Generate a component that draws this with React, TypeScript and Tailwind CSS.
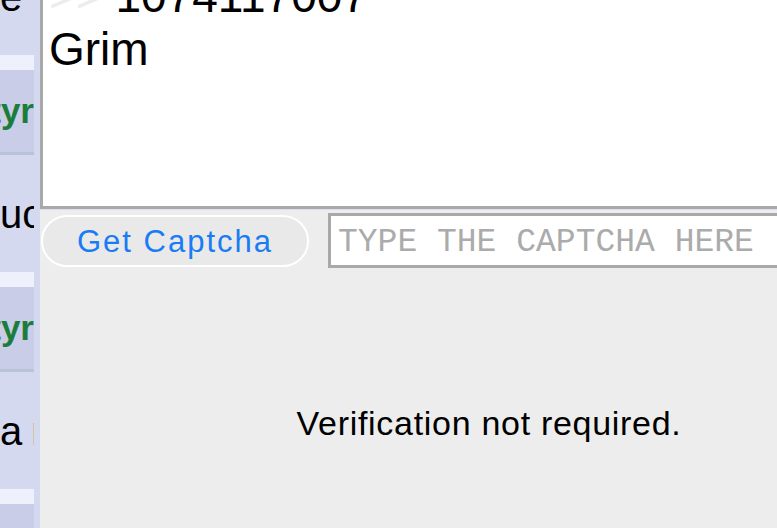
const sans = "font-['Liberation_Sans','Helvetica',Arial,sans-serif]";

const rows = [
  { text: "e", name: "Satyr" },
  { text: "uc", name: "Satyr" },
  { text: "a r", name: "Satyr" },
];

function SideItem({ text, name }: { text: string; name: string }) {
  return (
    <>
      <div className="h-[117px] w-[34px] shrink-0 overflow-hidden whitespace-nowrap pt-[36px] text-[40px] leading-[46px] text-black [word-spacing:-2px]">
        {text}
      </div>
      <div className="flex h-[100px] w-[34px] shrink-0 flex-col">
        <div className="h-[15px] bg-[#eef0fb]" />
        <div className="flex h-[82px] items-center justify-end overflow-hidden whitespace-nowrap bg-[#c9cde8] text-[35px] font-bold text-[#1b7d3b]">
          {name}
        </div>
        <div className="h-[3px] bg-[#b8c2d8]" />
      </div>
    </>
  );
}

export default function App() {
  return (
    <div className={`flex h-[528px] w-[777px] overflow-hidden bg-[#d5d9ef] ${sans}`}>
      {/* sidebar list */}
      <div className="flex w-[40px] shrink-0 flex-col overflow-hidden">
        <div className="mt-[-62px] flex flex-col">
          {rows.map((r, i) => (
            <SideItem key={i} text={r.text} name={r.name} />
          ))}
        </div>
      </div>

      {/* reply panel */}
      <div className="flex w-[898px] shrink-0 flex-col bg-[#ededed]">
        <div className="h-[209px] overflow-hidden border-b-[3px] border-l-[3px] border-[#a9a9a9] bg-white pl-[6px]">
          <div className="mt-[-30px] text-[46px] leading-[53px] text-black">
            <div className="whitespace-nowrap">
              <span className="text-[#ececec]">&gt;&gt;</span> 1074117007
            </div>
            <div>Grim</div>
          </div>
        </div>
        <div className="h-[4px] border-t border-[#dcdff0]" />

        <div className="flex items-center gap-[19px] pl-[1px]">
          <button className="flex h-[52px] w-[268px] items-center justify-center rounded-full border-2 border-white bg-[#e9e9e9] pt-[3px] text-[31px] tracking-[2px] text-[#1a7cf4]">
            Get Captcha
          </button>
          <div className="flex h-[55px] flex-1 items-center border-[3px] border-[#a9a9a9] bg-white pl-[7px] pt-[4px] font-['Liberation_Mono','Courier_New',monospace] text-[33px] text-[#ababab]">
            TYPE THE CAPTCHA HERE
          </div>
        </div>

        <div className="flex flex-1 items-start justify-center pt-[130px] text-[34px] tracking-[0.7px] text-black">
          Verification not required.
        </div>
      </div>
    </div>
  );
}
